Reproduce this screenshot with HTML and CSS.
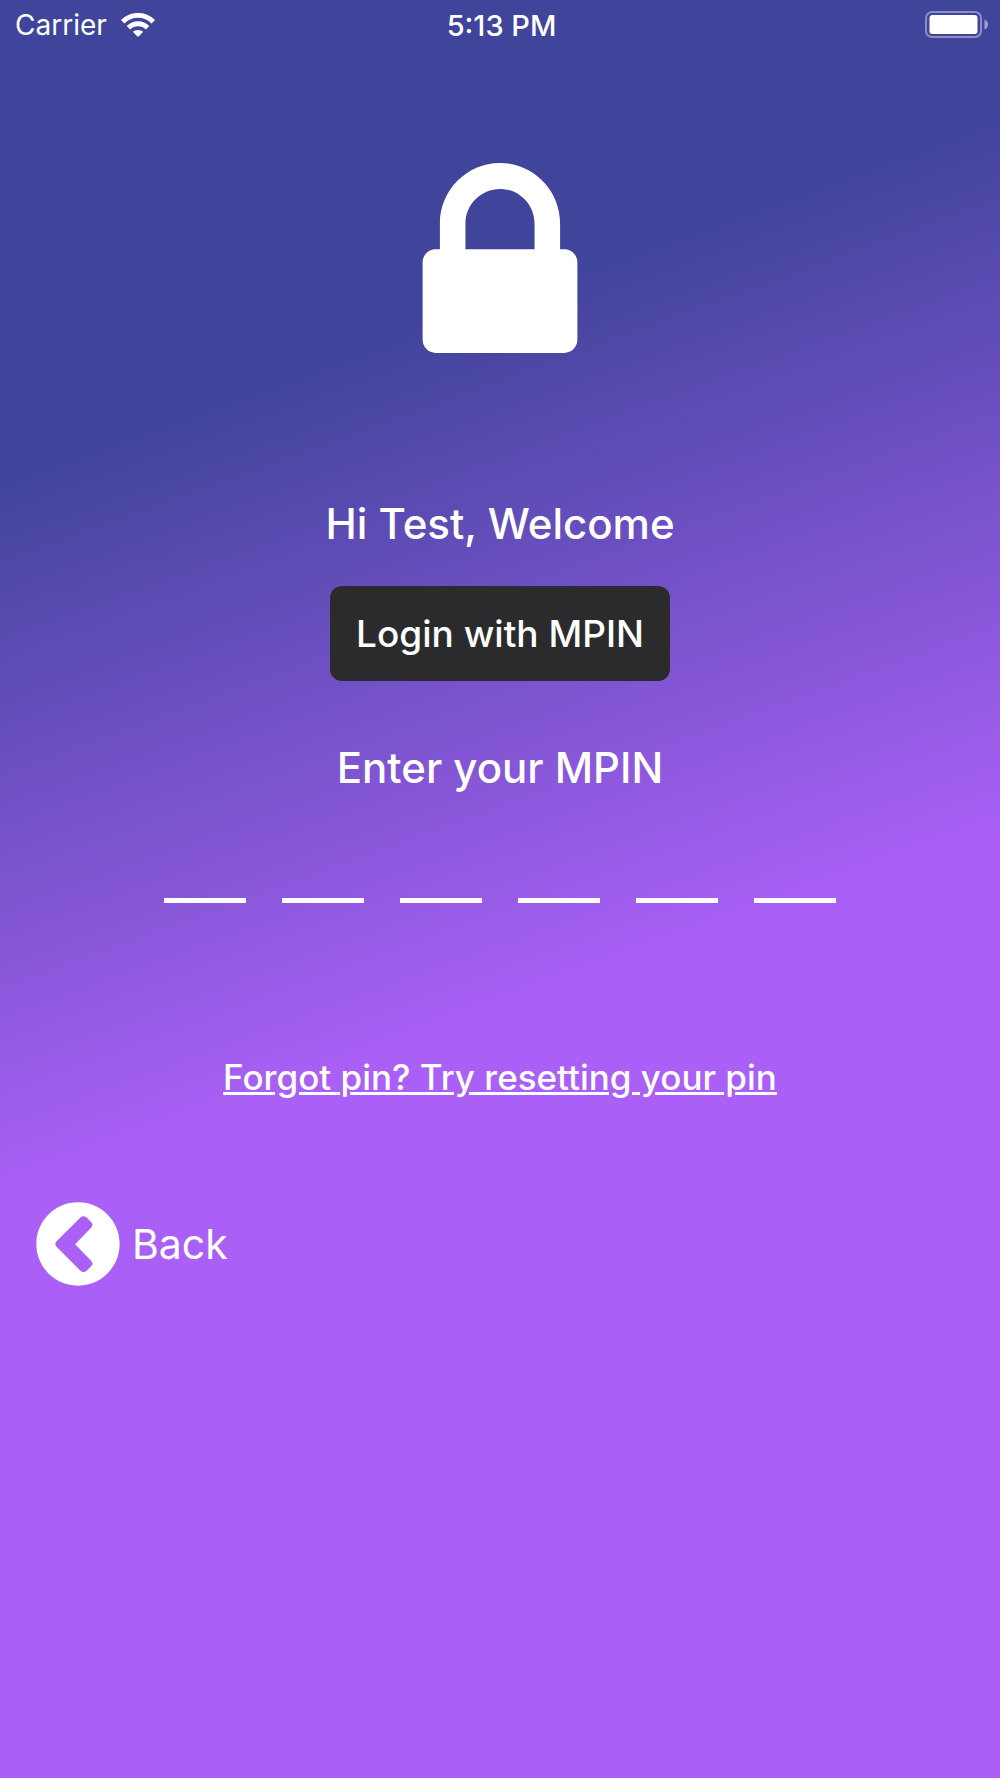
FILE: index.html
```
<!DOCTYPE html>
<html lang="en">

<head>
    <meta charset="UTF-8">
    <meta name="viewport" content="width=device-width, initial-scale=1.0">
    <title>MPIN Login</title>
    <link rel="stylesheet" href="styles.css">
</head>

<body>
    <header class="status-bar">
        <div class="carrier">
            <span>Carrier</span>
            <svg class="wifi" viewBox="0 0 34 24" aria-hidden="true">
                <path d="M0 7 A24 24 0 0 1 34 7 L30.5 10.5 A19 19 0 0 0 3.5 10.5 Z" />
                <path d="M5.7 13 A16 16 0 0 1 28.3 13 L24.8 16.5 A11 11 0 0 0 9.2 16.5 Z" />
                <path d="M11.8 18.8 A8 8 0 0 1 22.2 18.8 L17 24 Z" />
            </svg>
        </div>
        <div class="time">5:13 PM</div>
        <div class="power">
            <svg class="battery" viewBox="0 0 63 28" aria-hidden="true">
                <rect class="battery-case" x="1" y="1" width="55" height="25" rx="6" />
                <rect x="4.5" y="4" width="48" height="19" rx="3" />
                <path class="battery-tip" d="M59.5 8.5 Q63 10 63 13.5 Q63 17 59.5 18.5 Z" />
            </svg>
        </div>
    </header>

    <main class="login">
        <svg class="lock" viewBox="0 0 448 550" aria-hidden="true">
            <path d="M410 250h-12v-75C398 79 320 0 224 0S50 79 50 175v75H38c-21 0-38 17-38 37v225c0 21 17 38 38 38h372c21 0 38-17 38-38V287c0-20-17-37-38-37zM324 250H124v-75c0-55 45-100 100-100s100 45 100 100z" />
        </svg>
        <h1 class="welcome">Hi Test, Welcome</h1>
        <button class="login-btn" type="button">Login with MPIN</button>
        <h2 class="prompt" id="pinLabel">Enter your MPIN</h2>
        <div class="pin-group" role="group" aria-labelledby="pinLabel">
            <input type="password" maxlength="1" inputmode="numeric" aria-label="Digit 1">
            <input type="password" maxlength="1" inputmode="numeric" aria-label="Digit 2">
            <input type="password" maxlength="1" inputmode="numeric" aria-label="Digit 3">
            <input type="password" maxlength="1" inputmode="numeric" aria-label="Digit 4">
            <input type="password" maxlength="1" inputmode="numeric" aria-label="Digit 5">
            <input type="password" maxlength="1" inputmode="numeric" aria-label="Digit 6">
        </div>
        <a class="forgot" href="#">Forgot pin? Try resetting your pin</a>
    </main>

    <button class="back-btn" type="button">
        <svg class="back-icon" viewBox="0 0 512 512" aria-hidden="true">
            <path fill-rule="evenodd" d="M256 504C119 504 8 393 8 256S119 8 256 8s248 111 248 248-111 248-248 248zM127 271L272 417q17 13 34 0l28-28q17-17 0-34L239 257l95-98q17-17 0-34l-28-28q-17-13-34 0L127 241q-12 15 0 30z" />
        </svg>
        <span>Back</span>
    </button>
</body>

</html>
```

FILE: styles.css
```
* {
    box-sizing: border-box;
}

body {
    font-family: Inter, "Liberation Sans", sans-serif;
    color: #fff;
    margin: 0;
    min-height: 100vh;
    background: linear-gradient(160deg, #40449b 22%, #aa60f6 56%);
}

svg {
    fill: #fff;
    display: block;
}

.status-bar {
    display: flex;
    align-items: center;
    height: 50px;
    padding: 0 12px 0 15px;
    font-size: 28px;
}

.carrier,
.power {
    flex: 1;
    display: flex;
    align-items: center;
}

.carrier {
    gap: 14px;
}

.power {
    justify-content: flex-end;
}

.wifi {
    width: 34px;
    height: 24px;
}

.time {
    font-size: 29px;
    font-weight: 500;
}

.battery {
    width: 63px;
    height: 28px;
}

.battery-case {
    fill: none;
    stroke: #fff;
    stroke-width: 2;
    opacity: 0.4;
}

.battery-tip {
    opacity: 0.5;
}

.login {
    display: flex;
    flex-direction: column;
    align-items: center;
    padding-top: 113px;
}

.lock {
    width: 156px;
    height: 190px;
}

.welcome,
.prompt {
    margin: 0;
    font-size: 42px;
    line-height: 52px;
    font-weight: 500;
}

.welcome {
    margin-top: 145px;
}

.login-btn {
    margin-top: 36px;
    height: 95px;
    padding: 0 26px;
    border: none;
    border-radius: 12px;
    background-color: #2b2b2d;
    color: #fff;
    font-family: inherit;
    font-size: 37px;
    font-weight: 500;
    cursor: pointer;
}

.prompt {
    margin-top: 61px;
}

.pin-group {
    display: flex;
    gap: 36px;
    margin-top: 37px;
}

.pin-group input {
    width: 82px;
    height: 72px;
    padding: 0;
    border: none;
    border-bottom: 5px solid #fff;
    background: none;
    color: #fff;
    font-size: 42px;
    text-align: center;
    outline: none;
}

.forgot {
    margin-top: 152px;
    color: #fff;
    font-size: 35px;
    line-height: 44px;
    font-weight: 500;
}

.back-btn {
    display: flex;
    align-items: center;
    gap: 11px;
    margin: 102px 0 0 35px;
    padding: 0;
    border: none;
    background: none;
    color: #fff;
    font-family: inherit;
    font-size: 41px;
    cursor: pointer;
}

.back-icon {
    width: 86px;
    height: 86px;
}
```
